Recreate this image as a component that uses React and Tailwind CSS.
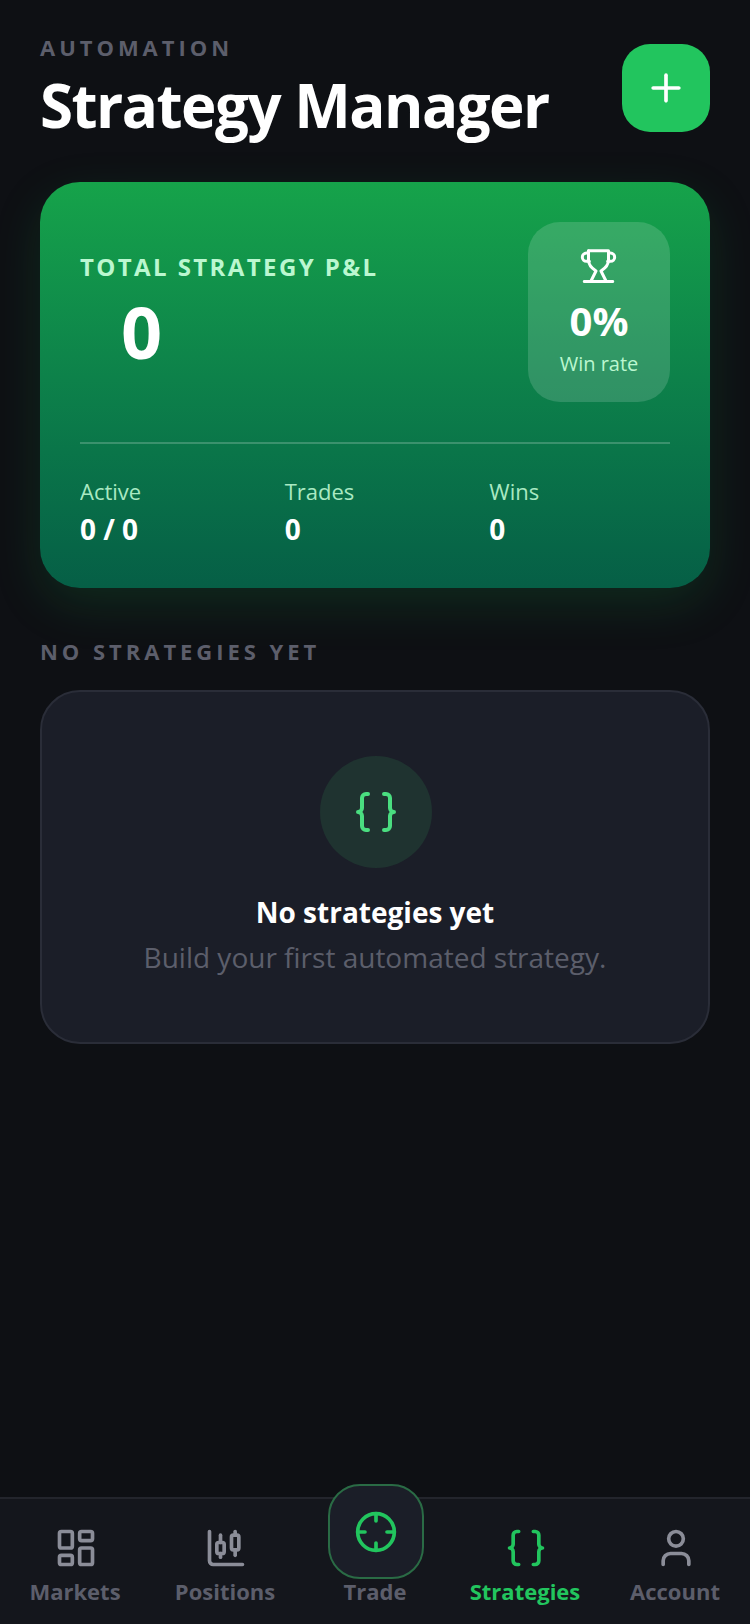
import React from "react";
import { Plus, Braces, LayoutDashboard, ChartCandlestick, Crosshair, User } from "lucide-react";

function Trophy() {
  return (
    <svg width="40" height="40" viewBox="0 0 24 24" fill="none" stroke="currentColor" strokeWidth="1.8" strokeLinecap="round" strokeLinejoin="round">
      <path d="M5.7 2.8H17.7V8.5c0 2.8-2 4.8-4.5 6.5l3 6" />
      <path d="M5.7 2.8V8.5c0 2.8 2 4.8 4.5 6.5l-3 6" />
      <path d="M5.7 4.2H4.5a2.5 2.5 0 0 0 0 5h1.7" />
      <path d="M17.7 4.2h1.2a2.5 2.5 0 0 1 0 5h-1.7" />
      <path d="M3.2 21.3h17" />
    </svg>
  );
}

function Stat({ label, value }) {
  return (
    <div className="flex flex-col">
      <span className="text-[22px] leading-[32px] text-[#bbf7d0] opacity-90">{label}</span>
      <span className="mt-[3px] text-[28px] leading-[38px] font-bold text-white">{value}</span>
    </div>
  );
}

function NavItem({ icon: Icon, label, active }) {
  return (
    <div className="flex flex-col items-center pt-[27px]">
      <Icon size={44} strokeWidth={2} className={`ml-[2px] ${active ? "text-[#22c55e]" : "text-[#8b8d98]"}`} />
      <span className={`mt-[6px] text-[22px] leading-[30px] font-bold ${active ? "text-[#22c55e]" : "text-[#5c5e6b]"}`}>{label}</span>
    </div>
  );
}

export default function App() {
  return (
    <div className="flex h-[1624px] w-[750px] flex-col overflow-hidden bg-[#0e1014] [font-family:'Open_Sans',sans-serif]">
      <main className="flex-1 px-[40px] pt-[31px]">
        <header className="flex items-start justify-between">
          <div>
            <div className="text-[22px] leading-[32px] font-bold tracking-[3.96px] text-[#5c5e6b]">AUTOMATION</div>
            <h1 className="mt-[4px] text-[60px] leading-[76px] font-bold tracking-[-1.5px] text-white">Strategy Manager</h1>
          </div>
          <button className="mt-[13px] flex h-[88px] w-[88px] items-center justify-center rounded-[28px] bg-[#22c55e] text-white">
            <Plus size={44} strokeWidth={2} />
          </button>
        </header>

        <section className="mt-[39px] h-[406px] rounded-[40px] bg-gradient-to-b from-[#16a34a] to-[#065f46] p-[40px] shadow-[0_16px_48px_rgba(22,163,74,0.18)]">
          <div className="flex items-start justify-between">
            <div className="pt-[29px]">
              <div className="text-[24px] leading-[32px] font-bold tracking-[2.4px] text-[#bbf7d0]">TOTAL STRATEGY P&amp;L</div>
              <div className="mt-[1px] pl-[41px] text-[72px] leading-[94px] font-bold text-white">0</div>
            </div>
            <div className="flex h-[180px] w-[142px] flex-col items-center rounded-[32px] bg-white/15 pt-[24px] text-white">
              <Trophy />
              <div className="mt-[8px] text-[40px] leading-[54px] font-bold">0%</div>
              <div className="mt-[2px] text-[20px] leading-[28px] text-[#bbf7d0]">Win rate</div>
            </div>
          </div>
          <div className="mt-[40px] h-[2px] bg-white/20" />
          <div className="mt-[31px] grid grid-cols-3 gap-[24px]">
            <Stat label="Active" value="0 / 0" />
            <Stat label="Trades" value="0" />
            <Stat label="Wins" value="0" />
          </div>
        </section>

        <div className="mt-[48px] text-[22px] leading-[30px] font-bold tracking-[3.96px] text-[#5c5e6b]">NO STRATEGIES YET</div>

        <section className="mt-[24px] flex h-[354px] flex-col items-center rounded-[40px] border-2 border-[#2a2d38] bg-[#1b1e28] pt-[64px]">
          <div className="ml-[2px] flex h-[112px] w-[112px] items-center justify-center rounded-full bg-[#1f3330] text-[#4ade80]">
            <Braces size={48} strokeWidth={2} />
          </div>
          <div className="mt-[23px] text-[28px] leading-[42px] font-bold text-white">No strategies yet</div>
          <div className="mt-[3px] text-[28px] leading-[42px] text-[#5c5e6b]">Build your first automated strategy.</div>
        </section>
      </main>

      <nav className="grid h-[127px] grid-cols-5 border-t-2 border-[#23252c] bg-[#14161c]">
        <NavItem icon={LayoutDashboard} label="Markets" />
        <NavItem icon={ChartCandlestick} label="Positions" />
        <div className="flex flex-col items-center">
          <div className="-mt-[15px] ml-[2px] flex h-[95px] w-[96px] items-center justify-center rounded-[32px] border-2 border-[#2a6b45] bg-[#1b1e28] text-[#22c55e]">
            <Crosshair size={44} strokeWidth={2} />
          </div>
          <span className="-mt-[3px] text-[22px] leading-[30px] font-bold text-[#5c5e6b]">Trade</span>
        </div>
        <NavItem icon={Braces} label="Strategies" active />
        <NavItem icon={User} label="Account" />
      </nav>
    </div>
  );
}
